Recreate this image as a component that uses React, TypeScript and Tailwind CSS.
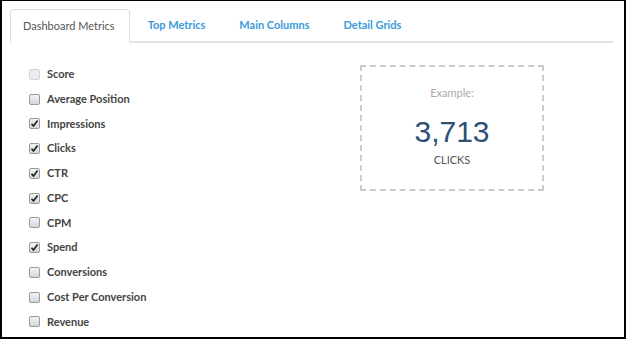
import { useState } from 'react';

const metrics = [
  { label: 'Score', checked: false, disabled: true },
  { label: 'Average Position', checked: false },
  { label: 'Impressions', checked: true },
  { label: 'Clicks', checked: true },
  { label: 'CTR', checked: true },
  { label: 'CPC', checked: true },
  { label: 'CPM', checked: false },
  { label: 'Spend', checked: true },
  { label: 'Conversions', checked: false },
  { label: 'Cost Per Conversion', checked: false },
  { label: 'Revenue', checked: false },
];

const tabs = ['Dashboard Metrics', 'Top Metrics', 'Main Columns', 'Detail Grids'];

function Box({ checked, disabled }: { checked: boolean; disabled?: boolean }) {
  return (
    <span
      className={`flex h-[11px] w-[11px] items-center justify-center rounded-[2px] border ${
        disabled ? 'border-[#d4d4d4] bg-[#ececec]' : 'border-[#9a9a9a] bg-gradient-to-b from-[#f4f4f4] to-[#d6d6d6]'
      }`}
    >
      {checked && (
        <svg width="9" height="9" viewBox="0 0 9 9">
          <path d="M1.5 4.8 L3.5 7 L7.6 1.6" fill="none" stroke="#222" strokeWidth="1.7" />
        </svg>
      )}
    </span>
  );
}

export default function App() {
  const [active] = useState(0);
  const [state, setState] = useState(metrics.map((m) => m.checked));

  return (
    <div className="h-[339px] w-[626px] overflow-hidden border-x-2 border-t border-b-2 border-black bg-white font-['Lato',sans-serif]">
      {/* tabs */}
      <div className="ml-[8px] mr-[11px] mt-[8px] flex h-[34px] border-b-2 border-[#e3e3e3]">
        {tabs.map((t, i) =>
          i === active ? (
            <div
              key={t}
              className="-mb-[2px] flex items-center rounded-t-[4px] border border-b-0 border-[#dddddd] bg-white pl-[12px] pr-[14px] text-[11px] text-[#555]"
            >
              {t}
            </div>
          ) : (
            <div key={t} className="ml-[2px] flex items-center px-[16px] text-[11px] font-bold text-[#3a9ad9]">
              {t}
            </div>
          )
        )}
      </div>

      <div className="flex">
        {/* checkbox list */}
        <div className="ml-[27px] mt-[19px] flex w-[300px] flex-col">
          {metrics.map((m, i) => (
            <label
              key={m.label}
              className="flex h-[24.75px] items-center gap-[7px] text-[11px] font-bold text-[#444]"
              onClick={() => !m.disabled && setState((s) => s.map((v, j) => (j === i ? !v : v)))}
            >
              <Box checked={state[i]} disabled={m.disabled} />
              {m.label}
            </label>
          ))}
        </div>

        {/* example */}
        <div className="ml-[31px] mt-[22px] flex h-[126px] w-[184px] flex-col items-center border-2 border-dashed border-[#cccccc]">
          <div className="mt-[18px] text-[11px] text-[#aaaaaa]">Example:</div>
          <div className="mt-[13px] font-['Liberation_Sans',sans-serif] text-[30px] leading-[34px] text-[#2c5075]">3,713</div>
          <div className="mt-[3px] text-[11px] text-[#555]">CLICKS</div>
        </div>
      </div>
    </div>
  );
}
